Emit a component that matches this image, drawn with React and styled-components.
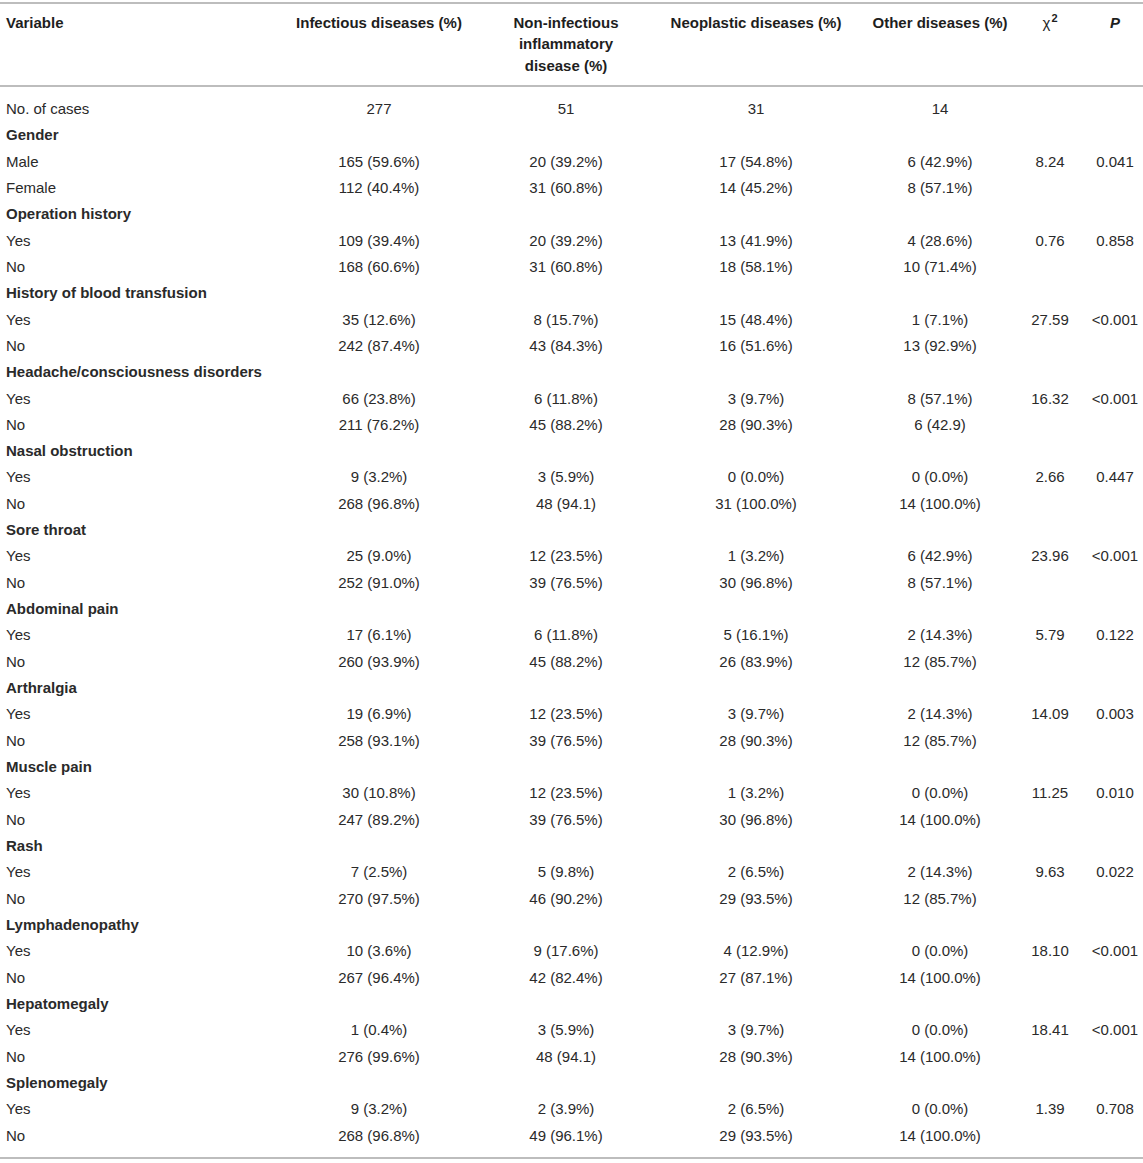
import React from 'react';
import styled, { createGlobalStyle } from 'styled-components';

const GlobalStyle = createGlobalStyle`
  body {
    margin: 0;
    background: #fff;
    font-family: "Liberation Sans", Arial, Helvetica, sans-serif;
    color: #2a2a2a;
  }
`;

const COLS = '285px 188px 186px 194px 174px 46px 70px';

const Table = styled.div`
  width: 1143px;
  margin-top: 2px;
  border-top: 2px solid #bdbdbd;
  border-bottom: 2px solid #bdbdbd;
  font-size: 15px;
`;

const HeadRow = styled.div`
  display: grid;
  grid-template-columns: ${COLS};
  align-items: start;
  padding: 8px 0 9px;
  border-bottom: 2px solid #bdbdbd;
  line-height: 21.3px;
  font-weight: bold;
  color: #1e1e1e;
`;

const Body = styled.div`
  padding: 9px 0 8px;
`;

const Row = styled.div`
  display: grid;
  grid-template-columns: ${COLS};
  align-items: center;
  height: 26.33px;
  line-height: 26.33px;
`;

const Cell = styled.div`
  text-align: ${p => (p.$left ? 'left' : 'center')};
  padding: ${p => p.$pad || '0'};
  white-space: ${p => (p.$wrap ? 'normal' : 'nowrap')};
  font-weight: ${p => (p.$bold ? 'bold' : 'inherit')};
  font-style: ${p => (p.$italic ? 'italic' : 'normal')};
`;

const Chi = styled.span`
  font-weight: normal;
`;

const Sup = styled.sup`
  font-size: 11px;
  font-weight: bold;
  line-height: 0;
  vertical-align: 6px;
  margin-left: 1px;
`;

const groups = [
  ['Gender', 'Male', 'Female',
    ['165 (59.6%)', '20 (39.2%)', '17 (54.8%)', '6 (42.9%)', '8.24', '0.041'],
    ['112 (40.4%)', '31 (60.8%)', '14 (45.2%)', '8 (57.1%)']],
  ['Operation history', 'Yes', 'No',
    ['109 (39.4%)', '20 (39.2%)', '13 (41.9%)', '4 (28.6%)', '0.76', '0.858'],
    ['168 (60.6%)', '31 (60.8%)', '18 (58.1%)', '10 (71.4%)']],
  ['History of blood transfusion', 'Yes', 'No',
    ['35 (12.6%)', '8 (15.7%)', '15 (48.4%)', '1 (7.1%)', '27.59', '<0.001'],
    ['242 (87.4%)', '43 (84.3%)', '16 (51.6%)', '13 (92.9%)']],
  ['Headache/consciousness disorders', 'Yes', 'No',
    ['66 (23.8%)', '6 (11.8%)', '3 (9.7%)', '8 (57.1%)', '16.32', '<0.001'],
    ['211 (76.2%)', '45 (88.2%)', '28 (90.3%)', '6 (42.9)']],
  ['Nasal obstruction', 'Yes', 'No',
    ['9 (3.2%)', '3 (5.9%)', '0 (0.0%)', '0 (0.0%)', '2.66', '0.447'],
    ['268 (96.8%)', '48 (94.1)', '31 (100.0%)', '14 (100.0%)']],
  ['Sore throat', 'Yes', 'No',
    ['25 (9.0%)', '12 (23.5%)', '1 (3.2%)', '6 (42.9%)', '23.96', '<0.001'],
    ['252 (91.0%)', '39 (76.5%)', '30 (96.8%)', '8 (57.1%)']],
  ['Abdominal pain', 'Yes', 'No',
    ['17 (6.1%)', '6 (11.8%)', '5 (16.1%)', '2 (14.3%)', '5.79', '0.122'],
    ['260 (93.9%)', '45 (88.2%)', '26 (83.9%)', '12 (85.7%)']],
  ['Arthralgia', 'Yes', 'No',
    ['19 (6.9%)', '12 (23.5%)', '3 (9.7%)', '2 (14.3%)', '14.09', '0.003'],
    ['258 (93.1%)', '39 (76.5%)', '28 (90.3%)', '12 (85.7%)']],
  ['Muscle pain', 'Yes', 'No',
    ['30 (10.8%)', '12 (23.5%)', '1 (3.2%)', '0 (0.0%)', '11.25', '0.010'],
    ['247 (89.2%)', '39 (76.5%)', '30 (96.8%)', '14 (100.0%)']],
  ['Rash', 'Yes', 'No',
    ['7 (2.5%)', '5 (9.8%)', '2 (6.5%)', '2 (14.3%)', '9.63', '0.022'],
    ['270 (97.5%)', '46 (90.2%)', '29 (93.5%)', '12 (85.7%)']],
  ['Lymphadenopathy', 'Yes', 'No',
    ['10 (3.6%)', '9 (17.6%)', '4 (12.9%)', '0 (0.0%)', '18.10', '<0.001'],
    ['267 (96.4%)', '42 (82.4%)', '27 (87.1%)', '14 (100.0%)']],
  ['Hepatomegaly', 'Yes', 'No',
    ['1 (0.4%)', '3 (5.9%)', '3 (9.7%)', '0 (0.0%)', '18.41', '<0.001'],
    ['276 (99.6%)', '48 (94.1)', '28 (90.3%)', '14 (100.0%)']],
  ['Splenomegaly', 'Yes', 'No',
    ['9 (3.2%)', '2 (3.9%)', '2 (6.5%)', '0 (0.0%)', '1.39', '0.708'],
    ['268 (96.8%)', '49 (96.1%)', '29 (93.5%)', '14 (100.0%)']],
];

function DataRow({ label, values, bold }) {
  const v = values || [];
  return (
    <Row>
      <Cell $left $bold={bold} $pad="0 0 0 6px">{label}</Cell>
      <Cell>{v[0]}</Cell>
      <Cell>{v[1]}</Cell>
      <Cell>{v[2]}</Cell>
      <Cell>{v[3]}</Cell>
      <Cell>{v[4]}</Cell>
      <Cell $pad="0 0 0 14px">{v[5]}</Cell>
    </Row>
  );
}

export default function App() {
  return (
    <>
      <GlobalStyle />
      <Table>
        <HeadRow>
          <Cell $left $pad="0 0 0 6px">Variable</Cell>
          <Cell>Infectious diseases (%)</Cell>
          <Cell $wrap $pad="0 28px">Non-infectious inflammatory disease (%)</Cell>
          <Cell>Neoplastic diseases (%)</Cell>
          <Cell>Other diseases (%)</Cell>
          <Cell>
            <Chi>χ</Chi>
            <Sup>2</Sup>
          </Cell>
          <Cell $italic $pad="0 0 0 14px">P</Cell>
        </HeadRow>
        <Body>
          <DataRow label="No. of cases" values={['277', '51', '31', '14']} />
          {groups.map(([title, a, b, va, vb]) => (
            <React.Fragment key={title}>
              <DataRow label={title} bold />
              <DataRow label={a} values={va} />
              <DataRow label={b} values={vb} />
            </React.Fragment>
          ))}
        </Body>
      </Table>
    </>
  );
}
